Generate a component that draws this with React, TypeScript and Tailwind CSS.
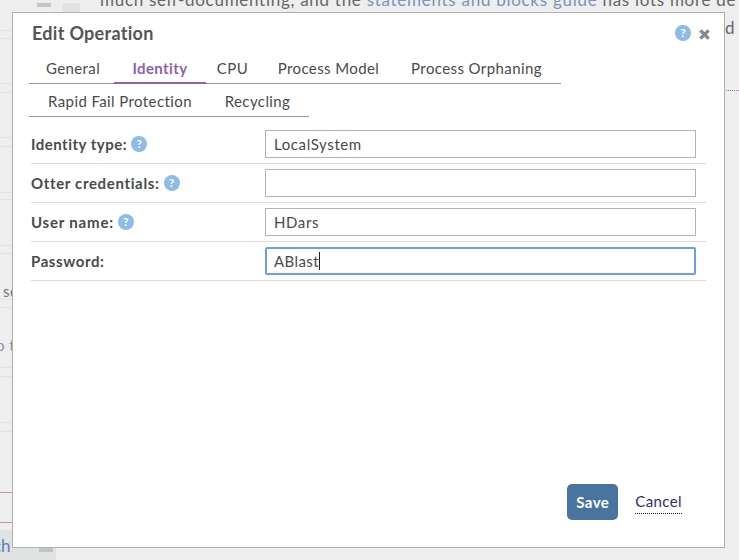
const SIDE_LINES = [
  "h-[31px]",
  "h-[8px]",
  "h-[45px]",
  "h-[9px]",
  "h-[45px]",
  "h-[9px]",
  "h-[46px]",
  "h-[7px]",
  "h-[46px]",
  "h-[8px]",
  "h-[46px]",
  "h-[8px]",
  "h-[60px]",
  "h-[9px]",
  "h-[46px]",
  "h-[9px]",
];

const TABS_ROW_ONE = [
  { label: "General", width: "w-[82px]" },
  { label: "Identity", width: "w-[92px]", active: true },
  { label: "CPU", width: "w-[53px]" },
  { label: "Process Model", width: "w-[139px]" },
  { label: "Process Orphaning", width: "w-[157px]" },
];

const TABS_ROW_TWO = [
  { label: "Rapid Fail Protection", width: "w-[176px]" },
  { label: "Recycling", width: "w-[99px]" },
];

const FIELDS = [
  { label: "Identity type:", value: "LocalSystem", tracking: "tracking-[0.5px]" },
  { label: "Otter credentials:", value: "", tracking: "tracking-[0.65px]" },
  { label: "User name:", value: "HDars", tracking: "tracking-[0.8px]" },
];

function HelpIcon() {
  return (
    <span className="inline-flex h-[16px] w-[16px] shrink-0 items-center justify-center rounded-full bg-[#8dbce8] text-[12px] font-bold leading-none tracking-normal text-white">
      ?
    </span>
  );
}

function Tab({ label, width, active }: { label: string; width: string; active?: boolean }) {
  return (
    <div
      className={`${width} -mb-px flex h-[29px] items-start justify-center pt-[2px] ${
        active ? "border-b-2 border-[#8f5fb0] font-bold text-[#8f5fb0]" : "text-[#4a4a4a]"
      }`}
    >
      {label}
    </div>
  );
}

function FormRow({
  label,
  tracking,
  help,
  children,
}: {
  label: string;
  tracking: string;
  help?: boolean;
  children: React.ReactNode;
}) {
  return (
    <div className="flex h-[39px] items-center border-b border-[#dcdcdc] pr-[10px]">
      <div className={`flex w-[234px] items-center gap-[4px] text-[15px] font-bold text-[#4a4a4a] ${tracking}`}>
        {label}
        {help && <HelpIcon />}
      </div>
      {children}
    </div>
  );
}

export default function App() {
  return (
    <div className="relative h-[560px] w-[739px] overflow-hidden bg-[#eeeeee] font-['Lato','Liberation_Sans',sans-serif]">
      {/* page behind the dialog */}
      <div className="flex h-[530px]">
        <div className="w-[12px]">
          {SIDE_LINES.map((h, i) => (
            <div key={i} className={`${h} border-b border-[#e2e2e2]`} />
          ))}
        </div>
        <div className="ml-[25px] mt-[3px] h-[4px] w-[14px] bg-[#c4c4c4]" />
        <div className="ml-[3px] w-px bg-[#e6e6e6]" />
        <div className="ml-[8px] mt-[3px] h-[10px] w-[17px] bg-[#e2e2e2]" />
        <div className="ml-[20px] -mt-[13px] whitespace-nowrap text-[17px] tracking-[0.72px] text-[#666]">
          much self-documenting, and the{" "}
          <span className="text-[#7d93b5]">statements and blocks guide</span> has lots more de
        </div>
      </div>
      <div className="h-[30px] w-[56px] bg-[#dfe3e4]" />

      <div className="absolute left-[725px] top-[15px] text-[17px] text-[#666]">d</div>
      <div className="absolute left-[724px] top-[90px] w-[15px] border-t border-dotted border-[#a06ab8]" />
      <div className="absolute left-0 top-[492px] w-[12px] border-t border-[#e0908a]" />
      <div className="absolute left-0 top-[522px] w-[12px] border-t border-[#e0908a]" />
      <div className="absolute left-[39px] top-[548px] h-[4px] w-[14px] bg-[#c4c4c4]" />
      <div className="absolute -left-[1px] top-[280px] text-[15px] tracking-[0.5px] text-[#777]">
        <span className="ml-[4px]">se</span>
      </div>
      <div className="absolute -left-[4px] top-[334px] text-[15px] tracking-[0.5px] text-[#7d93b5]">o t</div>
      <div className="absolute -left-[7px] top-[533px] text-[17px] text-[#5b7fb0]">ch</div>

      {/* dialog */}
      <div className="absolute left-[12px] top-[12px] flex h-[536px] w-[713px] flex-col border border-[#b0b0b0] bg-white px-[18px] text-[15px] tracking-[0.4px] text-[#4a4a4a]">
        <div className="flex items-start justify-between">
          <h1 className="ml-px mt-[9px] text-[18px] font-bold leading-[22px] tracking-[0.3px] text-[#555]">
            Edit Operation
          </h1>
          <div className="mr-[-4px] mt-[12px] flex items-center gap-[8px]">
            <HelpIcon />
            <svg viewBox="0 0 12 12" className="mt-[3px] h-[11px] w-[11px] text-[#8a8a8a]" fill="none" stroke="currentColor" strokeWidth="3.8">
              <path d="M1.5 1.5 10.5 10.5M10.5 1.5 1.5 10.5" />
            </svg>
          </div>
        </div>

        <div className="mt-[11px] -ml-[2px] flex w-[532px] border-b border-[#8c9aa8] pl-[3px]">
          {TABS_ROW_ONE.map((t) => (
            <Tab key={t.label} {...t} />
          ))}
        </div>
        <div className="mt-[4px] -ml-[2px] flex w-[280px] border-b border-[#8c9aa8] pl-[3px]">
          {TABS_ROW_TWO.map((t) => (
            <Tab key={t.label} {...t} />
          ))}
        </div>

        <div className="mt-[8px]">
          {FIELDS.map((f) => (
            <FormRow key={f.label} label={f.label} tracking={f.tracking} help>
              <input
                readOnly
                value={f.value}
                className="h-[28px] w-[431px] border border-[#b3b3b3] px-2 text-[15px] tracking-[0.6px] text-[#4a4a4a] outline-none"
              />
            </FormRow>
          ))}
          <FormRow label="Password:" tracking="tracking-[0.6px]">
            <div className="flex h-[28px] w-[431px] items-center rounded-[2px] border-2 border-[#6f9ce8] pl-[7px] text-[15px] tracking-[0.4px] text-[#4a4a4a]">
              ABlast
              <span className="h-[18px] w-px bg-[#222]" />
            </div>
          </FormRow>
        </div>

        <div className="mt-auto mb-[27px] flex items-center justify-end pr-[24px]">
          <button type="button" className="h-[36px] w-[51px] rounded-[5px] bg-[#4a74a0] text-[15px] font-bold text-white">
            Save
          </button>
          <a className="ml-[17px] border-b border-dotted border-[#222] pb-px text-[#3a2a70]">Cancel</a>
        </div>
      </div>
    </div>
  );
}
